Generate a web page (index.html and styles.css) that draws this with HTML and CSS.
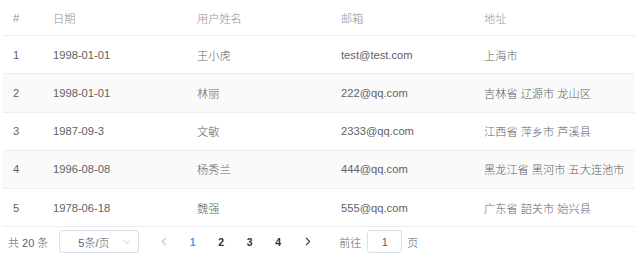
FILE: index.html
```html
<!DOCTYPE html>
<html lang="zh-CN">
<head>
<meta charset="utf-8">
<link rel="stylesheet" href="styles.css">
</head>
<body>
<div class="wrap">
  <table class="grid">
    <colgroup>
      <col class="c-idx"><col class="c-date"><col class="c-name"><col class="c-mail"><col>
    </colgroup>
    <thead>
      <tr><th>#</th><th>日期</th><th>用户姓名</th><th>邮箱</th><th>地址</th></tr>
    </thead>
    <tbody>
      <tr><td>1</td><td>1998-01-01</td><td>王小虎</td><td>test@test.com</td><td>上海市</td></tr>
      <tr class="stripe"><td>2</td><td>1998-01-01</td><td>林丽</td><td>222@qq.com</td><td>吉林省 辽源市 龙山区</td></tr>
      <tr><td>3</td><td>1987-09-3</td><td>文敏</td><td>2333@qq.com</td><td>江西省 萍乡市 芦溪县</td></tr>
      <tr class="stripe"><td>4</td><td>1996-08-08</td><td>杨秀兰</td><td>444@qq.com</td><td>黑龙江省 黑河市 五大连池市</td></tr>
      <tr><td>5</td><td>1978-06-18</td><td>魏强</td><td>555@qq.com</td><td>广东省 韶关市 始兴县</td></tr>
    </tbody>
  </table>
  <div class="pager-bar">
    <span class="total">共 20 条</span>
    <div class="sizes">
      <span class="sizes-text">5条/页</span>
      <svg class="sizes-arrow" width="8" height="6" viewBox="0 0 8 6"><path d="M1 1.5 L4 4.5 L7 1.5" fill="none" stroke="#C0C4CC" stroke-width="1"/></svg>
    </div>
    <span class="nav prev"><svg width="6" height="9" viewBox="0 0 6 9"><path d="M5 0.8 L1.3 4.5 L5 8.2" fill="none" stroke="#C0C4CC" stroke-width="1.1"/></svg></span>
    <ul class="pages">
      <li class="active">1</li><li>2</li><li>3</li><li>4</li>
    </ul>
    <span class="nav next"><svg width="6" height="9" viewBox="0 0 6 9"><path d="M1 0.8 L4.7 4.5 L1 8.2" fill="none" stroke="#303133" stroke-width="1.1"/></svg></span>
    <span class="jump">前往<span class="jump-input">1</span>页</span>
  </div>
</div>
</body>
</html>
```

FILE: styles.css
```css
html, body {
  margin: 0;
  padding: 0;
  background: #fff;
}
body {
  font-family: "Liberation Sans", Arial, "Noto Sans CJK SC", sans-serif;
  color: #606266;
  font-size: 11.2px;
  font-weight: 300;
}
.wrap {
  width: 632px;
  margin-left: 3px;
}
.grid {
  width: 632px;
  border-collapse: collapse;
  table-layout: fixed;
}
.c-idx { width: 40px; }
.c-date { width: 144px; }
.c-name { width: 144px; }
.c-mail { width: 143px; }
.grid th, .grid td {
  text-align: left;
  padding: 0 10px;
  border-bottom: 1px solid #EBEEF5;
  white-space: nowrap;
  overflow: hidden;
}
.grid th {
  height: 35px;
  font-weight: 300;
  color: #909399;
}
.grid td {
  height: 37.25px;
  color: #606266;
}
.grid tr.stripe td {
  background: #FAFAFA;
}
.pager-bar {
  display: flex;
  align-items: center;
  height: 27px;
  margin-top: 1px;
  padding-left: 5px;
  color: #606266;
  font-size: 11px;
}
.total {
  margin-right: 11px;
}
.sizes {
  box-sizing: border-box;
  width: 80px;
  height: 23px;
  border: 1px solid #DCDFE6;
  border-radius: 3px;
  display: flex;
  align-items: center;
  padding-left: 18px;
  padding-right: 7px;
  margin-right: 11px;
}
.sizes-text {
  flex: 1;
}
.nav {
  width: 28px;
  display: flex;
  align-items: center;
  justify-content: center;
}
.prev {
  width: 28px;
}
.pages {
  list-style: none;
  margin: 0;
  padding: 0;
  display: flex;
}
.pages li {
  width: 28.5px;
  text-align: center;
  font-weight: bold;
  color: #303133;
  font-size: 10.5px;
}
.pages li.active {
  color: #409EFF;
}
.next {
  margin-left: 2px;
}
.jump {
  display: flex;
  align-items: center;
  margin-left: 17px;
}
.jump-input {
  box-sizing: border-box;
  width: 35px;
  height: 23px;
  border: 1px solid #DCDFE6;
  border-radius: 3px;
  margin: 0 5px 0 6px;
  display: flex;
  align-items: center;
  justify-content: center;
  color: #606266;
}
```
